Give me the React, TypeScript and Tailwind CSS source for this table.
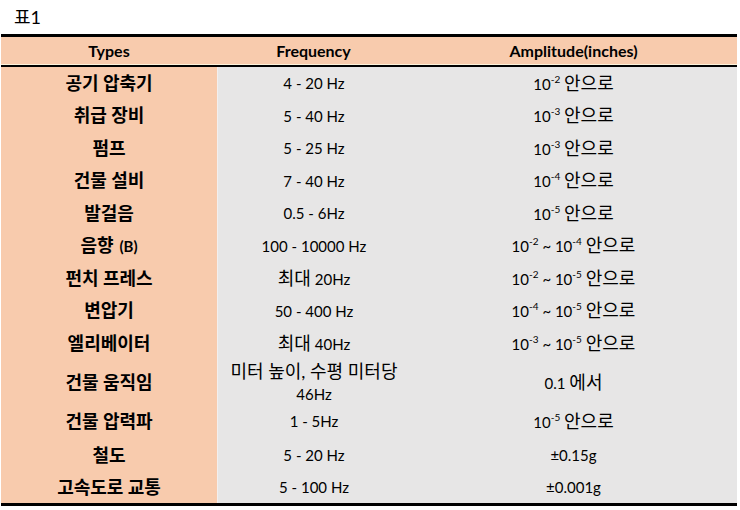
import React from 'react';

type Row = {
  type: React.ReactNode;
  freq: React.ReactNode;
  amp: React.ReactNode;
  h: string;
};

const Ko = ({ children }: { children: React.ReactNode }) => (
  <span className="text-[18px]">{children}</span>
);

const Pow = ({ e }: { e: string }) => (
  <>
    10<sup className="text-[10px] -top-[7px]">{e}</sup>
  </>
);

const amp = (a: string, b?: string) => (
  <span>
    <Pow e={a} />
    {b && (
      <>
        {' '}~ <Pow e={b} />
      </>
    )}{' '}
    <Ko>안으로</Ko>
  </span>
);

const rows: Row[] = [
  { type: '공기 압축기', freq: '4 - 20 Hz', amp: amp('-2'), h: 'h-[32.5px]' },
  { type: '취급 장비', freq: '5 - 40 Hz', amp: amp('-3'), h: 'h-[32.5px]' },
  { type: '펌프', freq: '5 - 25 Hz', amp: amp('-3'), h: 'h-[32.5px]' },
  { type: '건물 설비', freq: '7 - 40 Hz', amp: amp('-4'), h: 'h-[32.5px]' },
  { type: '발걸음', freq: '0.5 - 6Hz', amp: amp('-5'), h: 'h-[32.5px]' },
  {
    type: (
      <>
        음향<span className="ml-[6px] text-[15px]">(B)</span>
      </>
    ),
    freq: '100 - 10000 Hz',
    amp: amp('-2', '-4'),
    h: 'h-[32.5px]',
  },
  {
    type: '펀치 프레스',
    freq: (
      <span>
        <Ko>최대</Ko> 20Hz
      </span>
    ),
    amp: amp('-2', '-5'),
    h: 'h-[32.5px]',
  },
  { type: '변압기', freq: '50 - 400 Hz', amp: amp('-4', '-5'), h: 'h-[32.5px]' },
  {
    type: '엘리베이터',
    freq: (
      <span>
        <Ko>최대</Ko> 40Hz
      </span>
    ),
    amp: amp('-3', '-5'),
    h: 'h-[32.5px]',
  },
  {
    type: '건물 움직임',
    freq: (
      <span className="leading-[22px]">
        <Ko>미터 높이, 수평 미터당</Ko>
        <br />
        46Hz
      </span>
    ),
    amp: (
      <span>
        0.1 <Ko>에서</Ko>
      </span>
    ),
    h: 'h-[45px]',
  },
  { type: '건물 압력파', freq: '1 - 5Hz', amp: amp('-5'), h: 'h-[34px]' },
  { type: '철도', freq: '5 - 20 Hz', amp: '±0.15g', h: 'h-[33px]' },
  { type: '고속도로 교통', freq: '5 - 100 Hz', amp: '±0.001g', h: 'h-[31px]' },
];

export default function App() {
  return (
    <div
      className="w-[740px] h-[510px] bg-white text-black overflow-hidden"
      style={{ fontFamily: 'Lato, "Noto Sans CJK KR", sans-serif' }}
    >
      <div className="h-[34px] pl-[14px] pt-[6px] text-[18px] leading-[22px]">표1</div>
      <div className="ml-px w-[736px]">
        <div className="h-[3px] bg-black" />
        <div className="grid grid-cols-[216px_193px_1fr] h-[27px] bg-[#f8cbad] font-bold text-[16px] items-center text-center">
          <div>Types</div>
          <div>Frequency</div>
          <div>Amplitude(inches)</div>
        </div>
        <div className="h-px bg-[#fdf3dc]" />
        <div className="h-[2px] bg-black" />
        {rows.map((r, i) => (
          <div key={i} className={`grid grid-cols-[216px_193px_1fr] ${r.h}`}>
            <div className="bg-[#f8cbad] flex items-center justify-center font-bold text-[18px]">
              {r.type}
            </div>
            <div className="bg-[#e7e6e6] border-l border-[#f3efee] flex items-center justify-center text-center text-[15px]">
              {r.freq}
            </div>
            <div className="bg-[#e7e6e6] flex items-center justify-center text-[15px]">
              {r.amp}
            </div>
          </div>
        ))}
        <div className="h-[3px] bg-black" />
      </div>
    </div>
  );
}
